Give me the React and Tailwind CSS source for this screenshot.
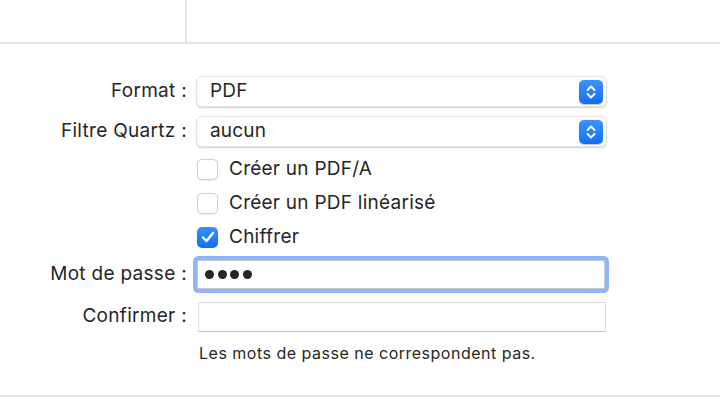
import { useState } from "react";

const font = { fontFamily: "Inter, 'Helvetica Neue', Arial, sans-serif" };

const Stepper = () => (
  <div className="w-[24px] h-[24px] rounded-[5px] bg-gradient-to-b from-[#3d92fb] to-[#0b6ff5] flex items-center justify-center shadow-[0_0.5px_1px_rgba(0,0,0,0.25)]">
    <svg width="12" height="16" viewBox="0 0 12 16" fill="none">
      <path d="M2.5 6 L6 2.5 L9.5 6" stroke="white" strokeWidth="1.9" strokeLinecap="round" strokeLinejoin="round" />
      <path d="M2.5 10 L6 13.5 L9.5 10" stroke="white" strokeWidth="1.9" strokeLinecap="round" strokeLinejoin="round" />
    </svg>
  </div>
);

const Select = ({ value }) => (
  <div className="w-[411px] h-[31px] rounded-[6px] bg-white border border-[#e3e3e3] shadow-[0_1px_1.5px_rgba(0,0,0,0.18)] flex items-center justify-between pl-[13px] pr-[3px]">
    <span className="text-[19px] tracking-[0.2px] text-[#262626]">{value}</span>
    <Stepper />
  </div>
);

const Checkbox = ({ checked, label, onToggle }) => (
  <div className="flex items-center gap-[11px] h-[34px] cursor-default" onClick={onToggle}>
    {checked ? (
      <div className="w-[21px] h-[21px] rounded-[5px] bg-gradient-to-b from-[#3a8ffb] to-[#0c6ff4] flex items-center justify-center">
        <svg width="14" height="12" viewBox="0 0 14 12" fill="none">
          <path d="M2 6.5 L5.5 10 L12 2" stroke="white" strokeWidth="2.4" strokeLinecap="round" strokeLinejoin="round" />
        </svg>
      </div>
    ) : (
      <div className="w-[21px] h-[21px] rounded-[5px] bg-white border border-[#cfcfcf] shadow-[0_0.5px_1px_rgba(0,0,0,0.08)]" />
    )}
    <span className="text-[19px] tracking-[0.25px] text-[#262626]">{label}</span>
  </div>
);

const Label = ({ children }) => (
  <div className="w-[188px] pr-[1px] text-right text-[19px] tracking-[0.3px] text-[#262626] shrink-0">{children}</div>
);

export default function App() {
  const [pdfa, setPdfa] = useState(false);
  const [lin, setLin] = useState(false);
  const [enc, setEnc] = useState(true);

  return (
    <div className="w-[720px] h-[414px] bg-white overflow-hidden" style={font}>
      {/* barre du haut */}
      <div className="h-[44px] flex border-b-2 border-[#e4e4e4]">
        <div className="w-[187px] border-r-2 border-[#e4e4e4]" />
        <div className="flex-1" />
      </div>

      <div className="pt-[32px] flex flex-col">
        <div className="flex items-center gap-[8px] h-[31px]">
          <Label>Format :</Label>
          <Select value="PDF" />
        </div>

        <div className="flex items-center gap-[8px] h-[31px] mt-[9px]">
          <Label>Filtre Quartz :</Label>
          <Select value="aucun" />
        </div>

        <div className="pl-[197px] mt-[5px] flex flex-col">
          <Checkbox label="Créer un PDF/A" checked={pdfa} onToggle={() => setPdfa(!pdfa)} />
          <Checkbox label="Créer un PDF linéarisé" checked={lin} onToggle={() => setLin(!lin)} />
          <Checkbox label="Chiffrer" checked={enc} onToggle={() => setEnc(!enc)} />
        </div>

        <div className="flex items-center gap-[9px] h-[40px]">
          <Label>Mot de passe :</Label>
          <div className="w-[408px] h-[29px] bg-white border border-[#c8c8c8] rounded-[2px] shadow-[0_0_0_4px_#8fb6f6] flex items-center pl-[7px] gap-[3.5px]">
            {[0, 1, 2, 3].map((i) => (
              <span key={i} className="w-[9px] h-[9px] rounded-full bg-[#262626]" />
            ))}
          </div>
        </div>

        <div className="flex items-center gap-[10px] h-[31px] mt-[7px]">
          <Label>Confirmer :</Label>
          <div className="w-[408px] h-[30px] bg-white border border-[#e0e0e0] border-b-[#c6c6c6]" />
        </div>

        <div className="pl-[199px] mt-[11px] h-[20px] flex items-center text-[16px] tracking-[0.5px] text-[#262626]">
          Les mots de passe ne correspondent pas.
        </div>
      </div>

      <div className="mt-[32px] border-t-2 border-[#e4e4e4]" />
    </div>
  );
}
